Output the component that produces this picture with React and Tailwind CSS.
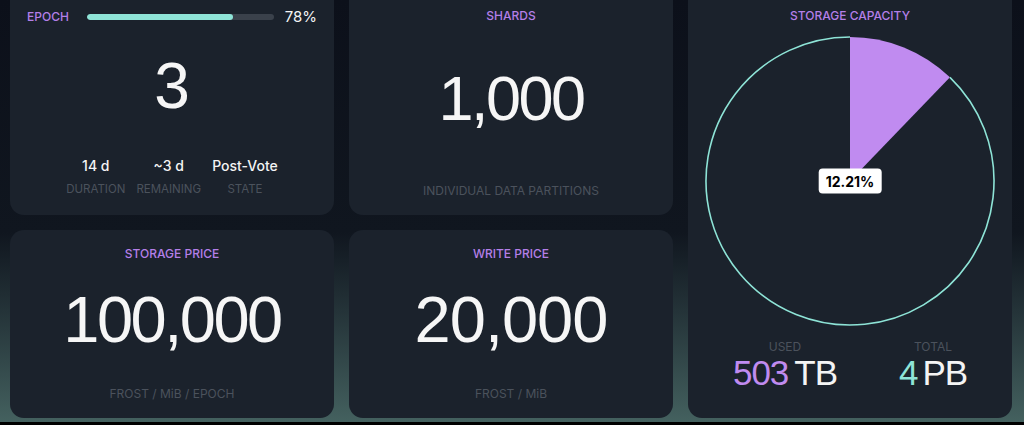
import React from "react";

const sans = { fontFamily: "Inter, 'Liberation Sans', sans-serif" };
const digits = { fontFamily: "'Liberation Sans', Arial, sans-serif" };

// slice of the capacity pie, from 12 o'clock clockwise
const USED_PCT = 12.21;
const R = 144;
const C = 146;
const ang = (USED_PCT / 100) * Math.PI * 2;
const ex = C + R * Math.sin(ang);
const ey = C - R * Math.cos(ang);

const Label = ({ children, className = "" }) => (
  <div className={`text-[12px] font-medium leading-[16px] text-[#b47fe8] ${className}`}>{children}</div>
);

const Sub = ({ children, className = "text-[12px]" }) => (
  <div className={`leading-[16px] text-[#4b525c] ${className}`}>{children}</div>
);

const Stat = ({ value, label }) => (
  <div className="flex flex-col items-center">
    <div className="text-[14px] font-medium leading-[20px] text-[#f4f4f4]">{value}</div>
    <Sub className="mt-[5px] text-[11.5px]">{label}</Sub>
  </div>
);

function EpochCard() {
  return (
    <div className="flex flex-col rounded-b-[14px] bg-[#1b222c] px-[17px] pt-[9px]">
      <div className="flex h-[16px] items-center">
        <Label>EPOCH</Label>
        <div className="ml-[18px] mr-[11px] h-[6px] flex-1 overflow-hidden rounded-full bg-[#3a414b]">
          <div className="h-full w-[78%] rounded-full bg-[#8ee4d7]"></div>
        </div>
        <div className="text-[15px] leading-[16px] text-[#f4f4f4]">78%</div>
      </div>
      <div className="mt-[29px] text-center text-[64px] leading-none text-[#f6f6f6]" style={digits}>
        3
      </div>
      <div className="mt-[38px] flex justify-center gap-[11px]">
        <Stat value="14 d" label="DURATION" />
        <Stat value="~3 d" label="REMAINING" />
        <Stat value="Post-Vote" label="STATE" />
      </div>
    </div>
  );
}

function NumberCard({ title, value, sub, top, size, track, gapTop, gapSub, roundTop }) {
  return (
    <div
      className={`flex flex-col items-center bg-[#1b222c] ${roundTop ? "rounded-[14px]" : "rounded-b-[14px]"}`}
      style={{ paddingTop: top }}
    >
      <Label>{title}</Label>
      <div
        className="leading-none text-[#f6f6f6]"
        style={{ ...digits, fontSize: size, letterSpacing: track, marginTop: gapTop }}
      >
        {value}
      </div>
      <Sub>
        <span className="block" style={{ marginTop: gapSub }}>{sub}</span>
      </Sub>
    </div>
  );
}

function CapacityCard() {
  return (
    <div className="row-span-2 flex flex-col items-center rounded-b-[14px] bg-[#1b222c] pt-[8px]">
      <Label>STORAGE CAPACITY</Label>
      <div className="relative mt-[11px] h-[292px] w-[292px]">
        <svg width="292" height="292" viewBox="0 0 292 292">
          <path d={`M${C} ${C} L${C} ${C - R} A${R} ${R} 0 0 1 ${ex} ${ey} Z`} fill="#c08bf0" />
          <path
            d={`M${ex} ${ey} A${R} ${R} 0 1 1 ${C} ${C - R}`}
            fill="none"
            stroke="#8ee4d7"
            strokeWidth="1.6"
          />
        </svg>
        <div className="absolute left-1/2 top-1/2 flex h-[25px] -translate-x-1/2 -translate-y-1/2 items-center rounded-[4px] bg-white px-[7px] text-[14px] font-bold text-black">
          12.21%
        </div>
      </div>
      <div className="mt-[12px] flex w-full justify-around px-[14px]">
        <div className="flex flex-col items-center">
          <Sub>USED</Sub>
          <div className="flex gap-[6px] text-[35px] leading-none tracking-[-1px]" style={digits}>
            <span className="text-[#c08bf0]">503</span>
            <span className="text-[#f4f4f4]">TB</span>
          </div>
        </div>
        <div className="flex flex-col items-center">
          <Sub>TOTAL</Sub>
          <div className="flex gap-[5px] text-[35px] leading-none tracking-[-1px]" style={digits}>
            <span className="text-[#8ee4d7]">4</span>
            <span className="text-[#f4f4f4]">PB</span>
          </div>
        </div>
      </div>
    </div>
  );
}

export default function App() {
  return (
    <div className="h-[425px] w-[1024px] overflow-hidden" style={sans}>
      <div className="grid h-[422px] grid-cols-3 grid-rows-[215px_188px] gap-[15px] bg-linear-to-b from-[#0c101a] via-[#10161f] via-55% to-[#44615f] pl-[10px] pr-[12px]">
        <EpochCard />
        <NumberCard title="SHARDS" value="1,000" sub="INDIVIDUAL DATA PARTITIONS" top={8} size={63} track="-2.5px" gapTop={43} gapSub={53} />
        <CapacityCard />
        <NumberCard title="STORAGE PRICE" value="100,000" sub="FROST / MiB / EPOCH" top={16} size={65} track="-2.5px" gapTop={25} gapSub={34} roundTop />
        <NumberCard title="WRITE PRICE" value="20,000" sub="FROST / MiB" top={16} size={65} track="-1px" gapTop={25} gapSub={34} roundTop />
      </div>
      <div className="h-[3px] bg-black"></div>
    </div>
  );
}
